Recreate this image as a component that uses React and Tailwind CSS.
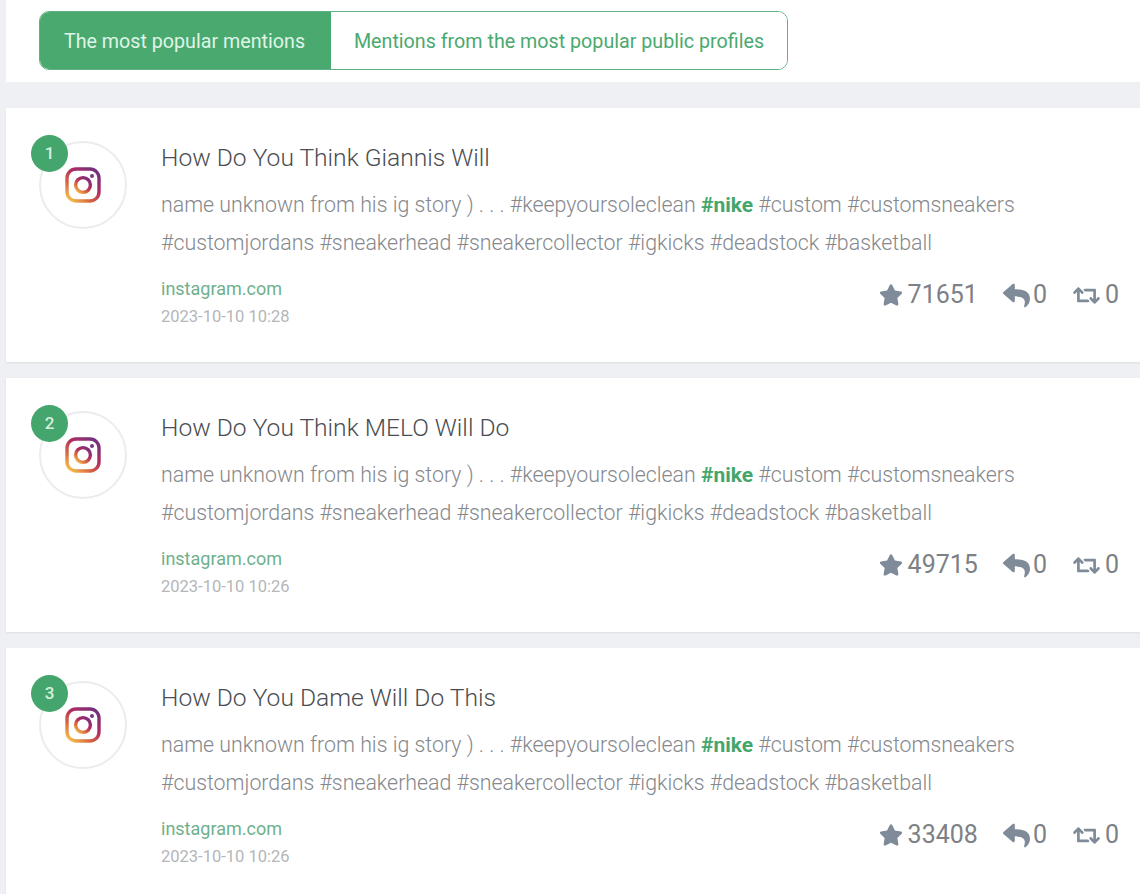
import { FaStar, FaReply, FaRetweet } from 'react-icons/fa';

const mentions = [
  { id: 1, title: 'How Do You Think Giannis Will', date: '2023-10-10 10:28', stars: 71651 },
  { id: 2, title: 'How Do You Think MELO Will Do', date: '2023-10-10 10:26', stars: 49715 },
  { id: 3, title: 'How Do You Dame Will Do This', date: '2023-10-10 10:26', stars: 33408 },
];

const InstagramIcon = ({ id }) => (
  <svg width="36" height="36" viewBox="0 0 36 36" fill="none">
    <defs>
      <linearGradient id={`ig-${id}`} x1="0.1" y1="1" x2="0.9" y2="0">
        <stop offset="0" stopColor="#f5c04e" />
        <stop offset="0.3" stopColor="#d9663f" />
        <stop offset="0.6" stopColor="#b12c62" />
        <stop offset="1" stopColor="#70307f" />
      </linearGradient>
    </defs>
    <rect x="2" y="2" width="32" height="32" rx="9" stroke={`url(#ig-${id})`} strokeWidth="3.400" />
    <circle cx="18" cy="18" r="7.400" stroke={`url(#ig-${id})`} strokeWidth="3.400" />
    <circle cx="27" cy="9" r="2" fill="#7d3585" />
  </svg>
);

const MentionCard = ({ item }) => (
  <div className="bg-white ml-[6px] h-[254px] shrink-0 flex pt-[33px] shadow-[0_1px_2px_rgba(0,0,0,0.08)]">
    <div className="relative w-[88px] h-[88px] ml-[33px] shrink-0 rounded-full border-2 border-[#ebecef] flex items-center justify-center">
      <InstagramIcon id={item.id} />
      <div className="absolute -left-[10px] -top-[8px] w-[37px] h-[37px] rounded-full bg-[#44a66c] text-[#d6f0df] text-[17px] font-medium flex items-center justify-center">
        {item.id}
      </div>
    </div>
    <div className="flex-1 ml-[34px] pr-[21px]">
      <h3 className="text-[24.6px] leading-[34px] font-light text-[#4a4d52]">{item.title}</h3>
      <p className="mt-[11px] text-[21.35px] leading-[37px] font-light text-[#85888c] whitespace-nowrap">
        name unknown from his ig story ) . . . #keepyoursoleclean <b className="font-bold text-[21px] text-[#44a66c]">#nike</b> #custom #customsneakers
        <br />
        #customjordans #sneakerhead #sneakercollector #igkicks #deadstock #basketball
      </p>
      <div className="flex justify-between mt-[15px]">
        <div>
          <div className="text-[18px] leading-[26px] text-[#6fb08c]">instagram.com</div>
          <div className="text-[16.5px] leading-[26px] mt-[2px] text-[#b4b6b8]">{item.date}</div>
        </div>
        <div className="flex items-center h-[34px] mt-[2px] text-[25px] text-[#7d8185]">
          <FaStar size={24} color="#7f8b99" />
          <span className="ml-[5px]">{item.stars}</span>
          <FaReply size={27} color="#7f8b99" className="ml-[25px]" />
          <span className="ml-[3px]">0</span>
          <FaRetweet size={27} color="#7f8b99" className="ml-[26px]" />
          <span className="ml-[5px]">0</span>
        </div>
      </div>
    </div>
  </div>
);

export default function App() {
  return (
    <div className="w-[1140px] h-[894px] overflow-hidden bg-[#eff0f4] flex flex-col font-['Roboto',sans-serif]">
      <div className="bg-white ml-[6px] h-[82px] shrink-0 pt-[11px] pl-[33px]">
        <div className="flex w-[749px] h-[59px] rounded-[10px] border border-[#5fb283] overflow-hidden text-[19.7px]">
          <button className="w-[291px] pt-[2px] pr-[2px] bg-[#4aa96f] text-[#dff5e7] text-center">The most popular mentions</button>
          <button className="flex-1 pt-[2px] bg-white text-[#4aa96f] text-center">Mentions from the most popular public profiles</button>
        </div>
      </div>
      <div className="flex flex-col gap-[16px] mt-[26px]">
        {mentions.map((item) => (
          <MentionCard key={item.id} item={item} />
        ))}
      </div>
    </div>
  );
}
